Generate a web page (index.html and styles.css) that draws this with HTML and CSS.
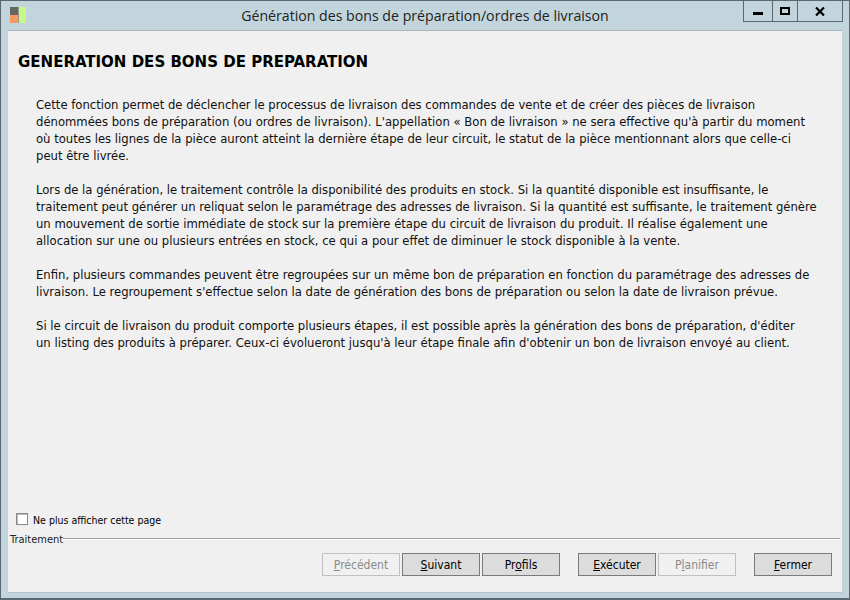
FILE: index.html
```html
<!DOCTYPE html>
<html lang="fr">
<head>
<meta charset="utf-8">
<title>Génération des bons de préparation/ordres de livraison</title>
<link rel="stylesheet" href="styles.css">
</head>
<body>
<div class="window">
  <header class="titlebar">
    <svg class="app-icon" width="16" height="16" viewBox="0 0 16 16">
      <rect x="0" y="0" width="8" height="8" fill="#666"/>
      <rect x="0" y="8" width="8" height="8" fill="#f79a60"/>
      <rect x="8" y="0" width="1" height="16" fill="#8f9a80"/>
      <rect x="9" y="0" width="7" height="16" fill="#c8f78c"/>
    </svg>
    <div class="title">Génération des bons de préparation/ordres de livraison</div>
    <div class="controls">
      <div class="ctl ctl-min"><svg width="10" height="3" viewBox="0 0 10 3"><rect width="10" height="3" fill="#000"/></svg></div>
      <div class="ctl ctl-max"><svg width="10" height="8" viewBox="0 0 10 8"><path d="M1 1h8v6H1z" fill="none" stroke="#000" stroke-width="2"/></svg></div>
      <div class="ctl ctl-close"><svg width="10" height="9" viewBox="0 0 10 9"><path d="M1 .5 9 8.500M9 .5 1 8.500" fill="none" stroke="#000" stroke-width="2.200"/></svg></div>
    </div>
  </header>
  <main class="panel">
    <h1 class="heading">GENERATION DES BONS DE PREPARATION</h1>
    <div class="body-text">
      <p>Cette fonction permet de déclencher le processus de livraison des commandes de vente et de créer des pièces de livraison<br>dénommées bons de préparation (ou ordres de livraison). L'appellation « Bon de livraison » ne sera effective qu'à partir du moment<br>où toutes les lignes de la pièce auront atteint la dernière étape de leur circuit, le statut de la pièce mentionnant alors que celle-ci<br>peut être livrée.</p>
      <p>Lors de la génération, le traitement contrôle la disponibilité des produits en stock. Si la quantité disponible est insuffisante, le<br>traitement peut générer un reliquat selon le paramétrage des adresses de livraison. Si la quantité est suffisante, le traitement génère<br>un mouvement de sortie immédiate de stock sur la première étape du circuit de livraison du produit. Il réalise également une<br>allocation sur une ou plusieurs entrées en stock, ce qui a pour effet de diminuer le stock disponible à la vente.</p>
      <p>Enfin, plusieurs commandes peuvent être regroupées sur un même bon de préparation en fonction du paramétrage des adresses de<br>livraison. Le regroupement s'effectue selon la date de génération des bons de préparation ou selon la date de livraison prévue.</p>
      <p>Si le circuit de livraison du produit comporte plusieurs étapes, il est possible après la génération des bons de préparation, d'éditer<br>un listing des produits à préparer. Ceux-ci évolueront jusqu'à leur étape finale afin d'obtenir un bon de livraison envoyé au client.</p>
    </div>
    <label class="check-row"><span class="checkbox"></span><span>Ne plus afficher cette page</span></label>
    <div class="group-label"><span>Traitement</span><span class="group-rule"></span></div>
    <div class="actions">
      <button class="btn" disabled><u>P</u>récédent</button>
      <button class="btn"><u>S</u>uivant</button>
      <button class="btn">Pr<u>o</u>fils</button>
      <button class="btn btn-gap"><u>E</u>xécuter</button>
      <button class="btn" disabled>P<u>l</u>anifier</button>
      <button class="btn btn-gap"><u>F</u>ermer</button>
    </div>
  </main>
</div>
</body>
</html>
```
FILE: styles.css
```css
* { box-sizing: border-box; }
html, body { margin: 0; padding: 0; }
body {
  width: 850px;
  height: 600px;
  overflow: hidden;
  font-family: "DejaVu Sans Condensed", "DejaVu Sans", sans-serif;
  font-size: 12px;
  color: #000;
}
.window {
  width: 850px;
  height: 600px;
  display: flex;
  flex-direction: column;
  background: #c3d5dc;
  border: 1px solid #5c6870;
  border-bottom-width: 2px;
}
.titlebar {
  height: 30px;
  flex: none;
  display: flex;
  align-items: flex-start;
  position: relative;
  border-bottom: 1px solid #aab4ba;
  margin: 0 7px;
}
.app-icon { margin: 6px 0 0 2px; }
.title {
  position: absolute;
  left: 0;
  right: 0;
  top: 4px;
  text-align: center;
  font-family: "Open Sans", sans-serif;
  font-size: 14.15px;
  line-height: 22px;
  color: #222;
}
.controls {
  margin-left: auto;
  margin-right: -1px;
  display: flex;
  height: 21px;
  border: 1px solid #5c6870;
  border-top: none;
  position: relative;
}
.ctl { display: flex; align-items: center; justify-content: center; height: 20px; }
.ctl + .ctl { border-left: 1px solid #5c6870; }
.ctl-min { width: 28px; }
.ctl-min svg { margin-top: 5px; }
.ctl-max { width: 25px; }
.ctl-close { width: 45px; }
.panel {
  flex: 1;
  margin: 0 7px 5px;
  background: #f0f0f0;
  display: flex;
  flex-direction: column;
  border-bottom: 1px solid #b5c4ca;
}
.heading {
  margin: 0;
  padding: 20px 0 0 10px;
  font-size: 16.7px;
  line-height: 20px;
  font-weight: bold;
  color: #000;
}
.body-text {
  padding: 25px 0 0 28px;
  flex: 1;
  font-size: 12.93px;
  line-height: 17px;
  color: #111;
  white-space: nowrap;
}
.body-text p { margin: 0 0 17px; }
.check-row {
  display: flex;
  align-items: center;
  gap: 5px;
  padding-left: 8px;
  height: 16px;
  font-size: 10.5px;
}
.checkbox {
  width: 12px;
  height: 12px;
  margin-top: -2px;
  background: #fff;
  border: 1px solid #8a8a8a;
  box-shadow: inset 1px 1px 0 #bbb;
}
.group-label {
  display: flex;
  align-items: center;
  margin: 4px 2px 0;
  height: 14px;
  font-size: 11px;
  color: #222;
}
.group-rule {
  flex: 1;
  height: 2px;
  margin-bottom: 1px;
  background: #a0a0a0;
  border-bottom: 1px solid #fff;
}
.actions {
  display: flex;
  justify-content: flex-end;
  gap: 2px;
  padding: 7px 10px 0 0;
  height: 46px;
}
.btn {
  width: 78px;
  height: 23px;
  padding: 0;
  font: inherit;
  color: #000;
  background: #dcdcdc;
  border: 1px solid #7a7a7a;
}
.btn:disabled {
  background: #f0f0f0;
  border-color: #c0c0c0;
  color: #8a8a8a;
}
.btn-gap { margin-left: 16px; }
```
